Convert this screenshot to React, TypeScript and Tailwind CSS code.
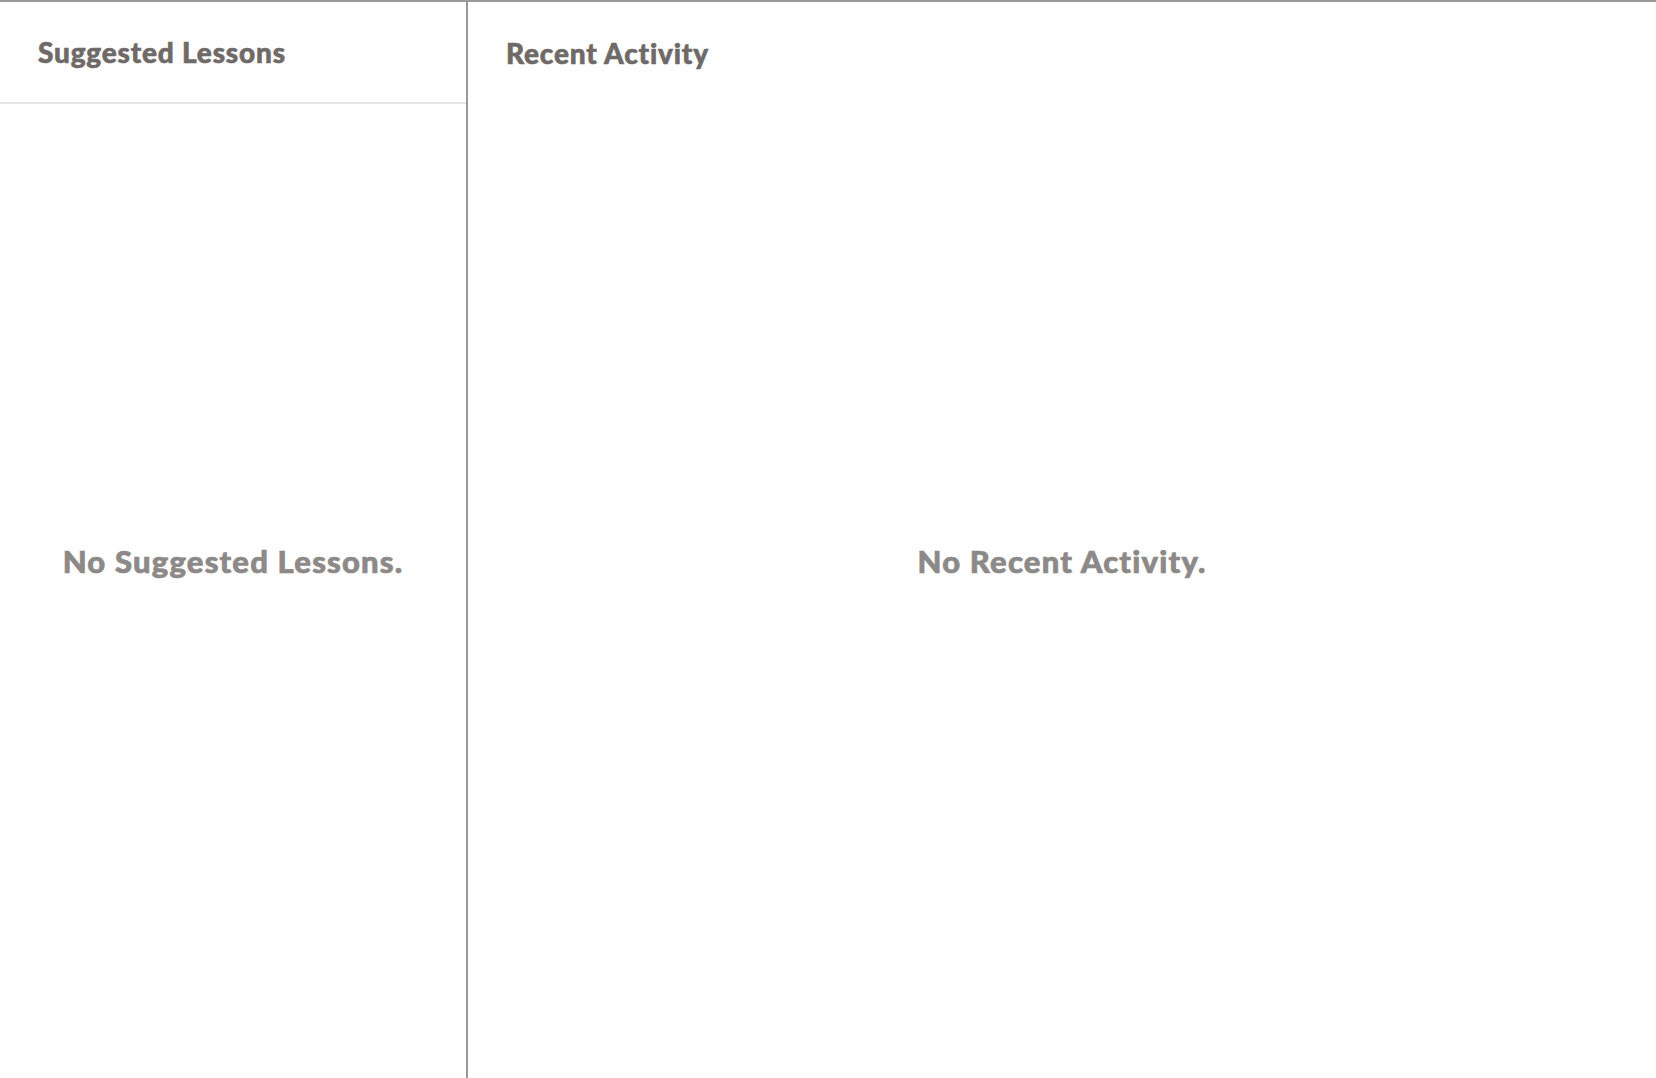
export default function App() {
  return (
    <div className="flex h-[1078px] w-full border-t-2 border-[#999999] bg-white font-['Lato',sans-serif]">
      <div className="flex w-[468px] shrink-0 flex-col border-r-2 border-[#999999]">
        <div className="flex h-[102px] shrink-0 items-center border-b-2 border-[#e4e4e4] px-[38px]">
          <h2 className="text-[28px] font-black tracking-[0.8px] text-[#6f6a68] [-webkit-text-stroke:0.6px_#6f6a68]">
            Suggested Lessons
          </h2>
        </div>
        <div className="flex h-[914px] items-center justify-center">
          <p className="text-[31px] font-black tracking-[1.2px] text-[#8d8988] [-webkit-text-stroke:0.7px_#8d8988]">
            No Suggested Lessons.
          </p>
        </div>
      </div>
      <div className="flex flex-1 flex-col">
        <div className="flex h-[102px] shrink-0 items-center px-[38px]">
          <h2 className="text-[28px] font-black tracking-[0.8px] text-[#6f6a68] [-webkit-text-stroke:0.6px_#6f6a68]">
            Recent Activity
          </h2>
        </div>
        <div className="flex h-[914px] items-center justify-center">
          <p className="text-[31px] font-black tracking-[1.2px] text-[#8d8988] [-webkit-text-stroke:0.7px_#8d8988]">
            No Recent Activity.
          </p>
        </div>
      </div>
    </div>
  )
}
